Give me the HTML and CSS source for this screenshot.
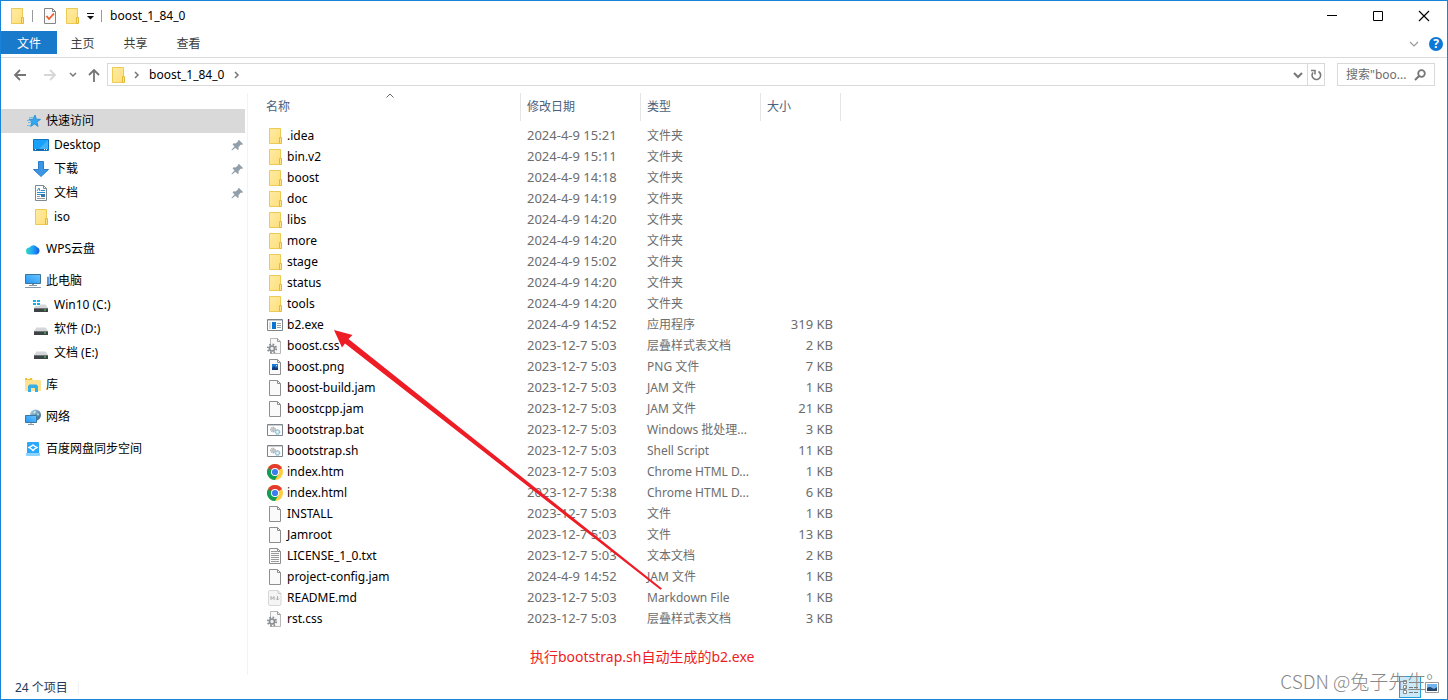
FILE: index.html
```html
<!DOCTYPE html>
<html lang="zh-CN">
<head>
<meta charset="utf-8">
<title>boost_1_84_0</title>
<link rel="stylesheet" href="styles.css">
</head>
<body>
<svg class="sprite" aria-hidden="true">
  <defs>
    <linearGradient id="g-folder" x1="0" y1="0" x2="1" y2="1"><stop offset="0" stop-color="#ffeba3"/><stop offset="1" stop-color="#ffdf7c"/></linearGradient>
    <linearGradient id="g-blue" x1="0" y1="1" x2="1" y2="0"><stop offset="0" stop-color="#2196f3"/><stop offset="1" stop-color="#6cc5ff"/></linearGradient>
    <linearGradient id="g-cloud" x1="0" y1="0" x2="1" y2="0"><stop offset="0" stop-color="#35d6c4"/><stop offset=".5" stop-color="#1ea4f7"/><stop offset="1" stop-color="#1558e0"/></linearGradient>
    <linearGradient id="g-globe" x1="0" y1="0" x2="1" y2="1"><stop offset="0" stop-color="#b9dcec"/><stop offset="1" stop-color="#275a7c"/></linearGradient>
  </defs>
  <symbol id="folder" viewBox="0 0 16 16"><path d="M2.5.5h11v15h-11z" fill="url(#g-folder)" stroke="#eccb55"/><path d="M12.5 9.5h2v6h-2z" fill="#ffe38a" stroke="#e3b93a"/></symbol>
  <symbol id="page" viewBox="0 0 16 16"><path d="M2.5.5h8l3 3v12h-11z" fill="#fafafa" stroke="#8e8e8e"/><path d="M10.5.5v3h3" fill="none" stroke="#8e8e8e"/></symbol>
  <symbol id="text" viewBox="0 0 16 16"><use href="#page"/><path d="M4 3.5h6M4 5.5h8M4 7.5h8M4 9.5h8M4 11.5h8M4 13.5h8" stroke="#9a9a9a"/></symbol>
  <symbol id="picture" viewBox="0 0 16 16"><use href="#page"/><path d="M5 5h6v6H5z" fill="#1f7bd8"/><path d="M5 11V9l2-2 2 2 1-1 1 1v2z" fill="#123c7c"/><path d="M9 6h1v1H9z" fill="#b7e0ff"/></symbol>
  <symbol id="gearpage" viewBox="0 0 16 16"><path d="M3.5.5h7l3 3v12h-10z" fill="#f8f8f8" stroke="#b8b8b8"/><path d="M10.500.5v3h3" fill="none" stroke="#999"/><circle cx="5" cy="10.500" r="4.200" fill="none" stroke="#858b90" stroke-width="1.800" stroke-dasharray="1.650 1.650"/><circle cx="5" cy="10.500" r="2.500" fill="#f0f0f0" stroke="#858b90" stroke-width="1.600"/></symbol>
  <symbol id="app" viewBox="0 0 16 16"><path d="M.5 2.500h15v11H.5z" fill="#fff" stroke="#7d858c"/><path d="M1 3h14v1H1z" fill="#c6cbd0"/><path d="M5 5h4v7H5z" fill="#0874d4"/><path d="M2 5h2v7H2z" fill="#d8dcdf"/><path d="M10 6.500h4M10 8.500h4M10 10.500h4" stroke="#9aa1a7"/></symbol>
  <symbol id="batch" viewBox="0 0 16 16"><path d="M.5 2.500h15v11H.5z" fill="#fff" stroke="#7d858c"/><path d="M1 3.500h14" stroke="#ccd0d4"/><circle cx="6" cy="7.500" r="2.300" fill="#f2f2f2" stroke="#7e888f" stroke-dasharray="1.300 .6"/><circle cx="6" cy="7.500" r="1" fill="none" stroke="#7e888f" stroke-width=".6"/><circle cx="10.500" cy="10" r="2.300" fill="#c4e3f3" stroke="#6f9ab4" stroke-dasharray="1.300 .6"/><circle cx="10.500" cy="10" r=".8" fill="#fff"/></symbol>
  <symbol id="chrome" viewBox="0 0 16 16"><circle cx="8" cy="8" r="8" fill="#ffcd40"/><path d="M8 8 1.070 4A8 8 0 0 1 14.930 4z" fill="#e33b2e"/><path d="M8 4h6.930L8 8z" fill="#e33b2e"/><path d="M1.070 4A8 8 0 0 0 8 16l3.460-6H8L4.540 10z" fill="#109d58"/><path d="M1.070 4 4.540 10 8 8V4z" fill="#109d58"/><path d="M1.070 4 3.500 8 8 4z" fill="#e33b2e"/><path d="M1.070 4 4.540 10 6 7z" fill="#109d58"/><circle cx="8" cy="8" r="4" fill="#fff"/><circle cx="8" cy="8" r="3.100" fill="#3b7ded"/></symbol>
  <symbol id="markdown" viewBox="0 0 16 16"><path d="M1.500 2q0-1.500 1.500-1.500h8l3 3V14q0 1.500-1.500 1.500H3Q1.500 15.500 1.500 14z" fill="#f5f5f5" stroke="#d6d6d6"/><path d="M11 .5v3h3" fill="none" stroke="#ccc"/><path d="M4 10V6.500l1.500 2 1.500-2V10M10.500 6v4M9 8.500l1.500 1.500L12 8.500" fill="none" stroke="#aaa"/></symbol>
  <symbol id="check" viewBox="0 0 16 16"><path d="M2.500.5h8l3 3v12h-11z" fill="#fafafa" stroke="#858585"/><path d="M10.500.5v3h3" fill="none" stroke="#858585"/><path d="m4.500 8 2.500 3 5-5.500" fill="none" stroke="#ee5a24" stroke-width="1.800"/></symbol>
  <symbol id="star" viewBox="0 0 16 16"><path d="m10 2 1.300 4.200 4.200.2-3.600 2.500 1.200 4.500L9.500 11l-4 2.500 1.400-4.300L4 6.300h4z" fill="#35a9ee" stroke="#2186cf" stroke-width=".8"/><path d="M4 4.500h4M2 7.500h3.500M3 9.500h3M2 12.500h4" stroke="#72bce8"/></symbol>
  <symbol id="desktop" viewBox="0 0 16 16"><path d="M.5 2.500h15v11H.5z" fill="#17a1fb" stroke="#1374bd"/><path d="M15 3v9L6 12z" fill="#41b3fb"/><path d="M1 12.500h14" stroke="#1b5d94"/><path d="M2 12.500h1M11 12.500h1M13 12.500h1" stroke="#fff"/></symbol>
  <symbol id="download" viewBox="0 0 16 16"><path d="M5.500.5h5v8h5L8 15.500.5 8.500h5z" fill="#3c96e6" stroke="#2d7dca"/></symbol>
  <symbol id="document" viewBox="0 0 16 16"><path d="M2.500.5h8l3 3v12h-11z" fill="#fff" stroke="#7d8990"/><path d="M10.500.5v3h3" fill="none" stroke="#7d8990"/><path d="m4 6 2-3 1 3M4 7.500h8M4 9.500h4M8 5.500h4" fill="none" stroke="#2d8dc9"/><path d="M8 9h4v3H8z" fill="#3774b0"/><path d="M4 11.500h3M4 13.500h8" stroke="#999"/></symbol>
  <symbol id="cloud" viewBox="0 0 16 16"><path d="M4.500 13.500a3.500 3.500 0 0 1 0-7 4.500 4.500 0 0 1 7.500-.5A4 4 0 0 1 12 13.500z" fill="url(#g-cloud)"/></symbol>
  <symbol id="computer" viewBox="0 0 16 16"><path d="M.5 1.500h15v9H.5z" fill="url(#g-blue)" stroke="#3a739c"/><path d="M7 11h2v1H7z" fill="#809bad"/><path d="M4 12.500h8M0 14.500h16" stroke="#8798a6"/></symbol>
  <symbol id="disk" viewBox="0 0 16 16"><path d="M3.500 6.500h9L15 10H1z" fill="#d4d6d9"/><path d="M1 10h14v4H1z" fill="#3e4245"/><path d="M1 10.500h14" stroke="#70757a"/><path d="M11 11.500h2v1h-2z" fill="#38e15c"/></symbol>
  <symbol id="windisk" viewBox="0 0 16 16"><use href="#disk" y="1"/><path d="M0 2h7v7H0z" fill="#fff"/><path d="M0 3h3v2H0zM4 3h3v2H4zM0 6h3v2H0zM4 6h3v2H4z" fill="#12b2ef"/></symbol>
  <symbol id="library" viewBox="0 0 16 16"><path d="M0 1h7l1 2h8v11H0z" fill="#ffe392"/><path d="M0 1h7v2H0z" fill="#f2c132"/><path d="M2 1.500h3" stroke="#fff"/><path d="M3 15V9l1.500-1.500h7L13 9v6h-3v-4H6v4z" fill="#35afe6"/></symbol>
  <symbol id="network" viewBox="0 0 16 16"><circle cx="10.500" cy="6" r="5.500" fill="url(#g-globe)"/><path d="M8 3l3-1-1 3zM12 4l2 1-1 2z" fill="#d9edf4"/><path d="M.5 6.500h11v7H.5z" fill="url(#g-blue)" stroke="#3a77a3"/><path d="M6 14v1M3 15.500h6" stroke="#8798a6"/></symbol>
  <symbol id="baidu" viewBox="0 0 16 16"><path d="M3 1h10q1 0 1 1v12q0 1-1 1H3q-1 0-1-1V2q0-1 1-1z" fill="#2ca8fa"/><path d="M1 12h14v2q0 1-1 1H2q-1 0-1-1z" fill="#8bd3ff"/><path d="m8 4 1.500 1.200L12 6.500 9.500 8 8 9.500 6.500 8 4 6.500l2.500-1.300z" fill="none" stroke="#fff" stroke-width="1.400"/></symbol>
  <symbol id="pin" viewBox="0 0 16 16"><path d="m10 3 4 4-1 1-1-.4-2.500 2.500.2 2.100-1 .8-2.200-2.300L3 13.500l-.6-.6L5.500 9.500 3.500 7.200l1-1 2 .3L9 4.500 8.900 3.600z" fill="#929fa9"/></symbol>
</svg>

<div class="window">
  <header class="titlebar">
    <svg class="icon"><use href="#folder"/></svg>
    <span class="divider"></span>
    <button class="plain" aria-label="属性"><svg class="icon"><use href="#check"/></svg></button>
    <button class="plain" aria-label="新建文件夹"><svg class="icon"><use href="#folder"/></svg></button>
    <button class="plain quick" aria-label="自定义快速访问工具栏"><svg width="8" height="8" viewBox="0 0 8 8"><path d="M1 1.500h7" stroke="#111"/><path d="M1 4h7L4.500 7.500z" fill="#111"/></svg></button>
    <span class="divider"></span>
    <h1 class="title">boost_1_84_0</h1>
    <div class="controls">
      <button class="plain control" aria-label="最小化"><svg width="12" height="12"><path d="M1 5.500h10" stroke="#000"/></svg></button>
      <button class="plain control" aria-label="最大化"><svg width="12" height="12"><path d="M1.500 1.500h9v9h-9z" fill="none" stroke="#000"/></svg></button>
      <button class="plain control" aria-label="关闭"><svg width="12" height="12"><path d="m1 1 10 10M11 1 1 11" stroke="#000" stroke-width="1.200"/></svg></button>
    </div>
  </header>

  <nav class="ribbon">
    <button class="tab tab-file">文件</button>
    <button class="tab">主页</button>
    <button class="tab">共享</button>
    <button class="tab">查看</button>
    <div class="ribbon-end">
      <button class="plain" aria-label="展开功能区"><svg width="10" height="14"><path d="m1 5 4 4 4-4" fill="none" stroke="#999" stroke-width="1.200"/></svg></button>
      <button class="plain help" aria-label="帮助">?</button>
    </div>
  </nav>

  <div class="navbar">
    <button class="plain" aria-label="后退"><svg width="14" height="14"><path d="M13 7H2M7 2 2 7l5 5" fill="none" stroke="#757575" stroke-width="1.800"/></svg></button>
    <button class="plain forward" aria-label="前进"><svg width="14" height="14"><path d="M1 7h11M7 2l5 5-5 5" fill="none" stroke="#d6d6d6" stroke-width="1.800"/></svg></button>
    <button class="plain recent" aria-label="最近浏览的位置"><svg width="8" height="14"><path d="m1 5 3 3 3-3" fill="none" stroke="#777" stroke-width="1.500"/></svg></button>
    <button class="plain up" aria-label="上移"><svg width="14" height="14"><path d="M7 14V2M2 7l5-5 5 5" fill="none" stroke="#757575" stroke-width="1.800"/></svg></button>
    <div class="address">
      <svg class="icon"><use href="#folder"/></svg>
      <svg class="crumb" width="6" height="8"><path d="m1 1 3 3-3 3" fill="none" stroke="#777" stroke-width="1.500"/></svg>
      <a class="path" href="#">boost_1_84_0</a>
      <svg class="crumb" width="6" height="8"><path d="m1 1 3 3-3 3" fill="none" stroke="#777" stroke-width="1.500"/></svg>
      <button class="plain history" aria-label="历史记录"><svg width="10" height="8"><path d="m1 2 4 4 4-4" fill="none" stroke="#777" stroke-width="2"/></svg></button>
      <button class="plain refresh" aria-label="刷新"><svg width="12" height="12"><path d="M8.500 2.500A4.300 4.300 0 1 1 3 3.500" fill="none" stroke="#777" stroke-width="1.600"/><path d="M1 1.500h4v4" fill="none" stroke="#777" stroke-width="1.500"/></svg></button>
    </div>
    <div class="search">
      <input class="search-input" type="text" aria-label="搜索" placeholder="搜索&quot;boo...">
      <svg width="12" height="12"><circle cx="7.500" cy="4.500" r="3.300" fill="none" stroke="#757575" stroke-width="1.800"/><path d="M5 7 1 11" stroke="#757575" stroke-width="2"/></svg>
    </div>
  </div>

  <div class="content">
    <aside class="sidebar">
      <div class="group">
        <a class="item selected" href="#"><svg class="icon"><use href="#star"/></svg>快速访问</a>
        <a class="item child" href="#"><svg class="icon"><use href="#desktop"/></svg>Desktop<svg class="icon pin"><use href="#pin"/></svg></a>
        <a class="item child" href="#"><svg class="icon"><use href="#download"/></svg>下载<svg class="icon pin"><use href="#pin"/></svg></a>
        <a class="item child" href="#"><svg class="icon"><use href="#document"/></svg>文档<svg class="icon pin"><use href="#pin"/></svg></a>
        <a class="item child" href="#"><svg class="icon"><use href="#folder"/></svg>iso</a>
      </div>
      <div class="group">
        <a class="item" href="#"><svg class="icon"><use href="#cloud"/></svg>WPS云盘</a>
      </div>
      <div class="group">
        <a class="item" href="#"><svg class="icon"><use href="#computer"/></svg>此电脑</a>
        <a class="item child" href="#"><svg class="icon"><use href="#windisk"/></svg>Win10 (C:)</a>
        <a class="item child" href="#"><svg class="icon"><use href="#disk"/></svg>软件 (D:)</a>
        <a class="item child" href="#"><svg class="icon"><use href="#disk"/></svg>文档 (E:)</a>
      </div>
      <div class="group">
        <a class="item" href="#"><svg class="icon"><use href="#library"/></svg>库</a>
      </div>
      <div class="group">
        <a class="item" href="#"><svg class="icon"><use href="#network"/></svg>网络</a>
      </div>
      <div class="group">
        <a class="item" href="#"><svg class="icon"><use href="#baidu"/></svg>百度网盘同步空间</a>
      </div>
    </aside>

    <main class="pane">
      <table class="files">
        <colgroup><col class="col-name"><col class="col-date"><col class="col-type"><col class="col-size"></colgroup>
        <thead>
          <tr>
            <th><button class="head">名称<svg class="sort" width="8" height="5"><path d="m.5 4.500 3.500-3.500 3.500 3.500" fill="none" stroke="#666"/></svg></button></th>
            <th><button class="head">修改日期</button></th>
            <th><button class="head">类型</button></th>
            <th><button class="head">大小</button></th>
          </tr>
        </thead>
        <tbody>
          <tr><td><span class="name"><svg class="icon"><use href="#folder"/></svg>.idea</span></td><td class="num">2024-4-9 15:21</td><td>文件夹</td><td class="size"></td></tr>
          <tr><td><span class="name"><svg class="icon"><use href="#folder"/></svg>bin.v2</span></td><td class="num">2024-4-9 15:11</td><td>文件夹</td><td class="size"></td></tr>
          <tr><td><span class="name"><svg class="icon"><use href="#folder"/></svg>boost</span></td><td class="num">2024-4-9 14:18</td><td>文件夹</td><td class="size"></td></tr>
          <tr><td><span class="name"><svg class="icon"><use href="#folder"/></svg>doc</span></td><td class="num">2024-4-9 14:19</td><td>文件夹</td><td class="size"></td></tr>
          <tr><td><span class="name"><svg class="icon"><use href="#folder"/></svg>libs</span></td><td class="num">2024-4-9 14:20</td><td>文件夹</td><td class="size"></td></tr>
          <tr><td><span class="name"><svg class="icon"><use href="#folder"/></svg>more</span></td><td class="num">2024-4-9 14:20</td><td>文件夹</td><td class="size"></td></tr>
          <tr><td><span class="name"><svg class="icon"><use href="#folder"/></svg>stage</span></td><td class="num">2024-4-9 15:02</td><td>文件夹</td><td class="size"></td></tr>
          <tr><td><span class="name"><svg class="icon"><use href="#folder"/></svg>status</span></td><td class="num">2024-4-9 14:20</td><td>文件夹</td><td class="size"></td></tr>
          <tr><td><span class="name"><svg class="icon"><use href="#folder"/></svg>tools</span></td><td class="num">2024-4-9 14:20</td><td>文件夹</td><td class="size"></td></tr>
          <tr><td><span class="name"><svg class="icon"><use href="#app"/></svg>b2.exe</span></td><td class="num">2024-4-9 14:52</td><td>应用程序</td><td class="size">319 KB</td></tr>
          <tr><td><span class="name"><svg class="icon"><use href="#gearpage"/></svg>boost.css</span></td><td class="num">2023-12-7 5:03</td><td>层叠样式表文档</td><td class="size">2 KB</td></tr>
          <tr><td><span class="name"><svg class="icon"><use href="#picture"/></svg>boost.png</span></td><td class="num">2023-12-7 5:03</td><td>PNG 文件</td><td class="size">7 KB</td></tr>
          <tr><td><span class="name"><svg class="icon"><use href="#page"/></svg>boost-build.jam</span></td><td class="num">2023-12-7 5:03</td><td>JAM 文件</td><td class="size">1 KB</td></tr>
          <tr><td><span class="name"><svg class="icon"><use href="#page"/></svg>boostcpp.jam</span></td><td class="num">2023-12-7 5:03</td><td>JAM 文件</td><td class="size">21 KB</td></tr>
          <tr><td><span class="name"><svg class="icon"><use href="#batch"/></svg>bootstrap.bat</span></td><td class="num">2023-12-7 5:03</td><td>Windows 批处理...</td><td class="size">3 KB</td></tr>
          <tr><td><span class="name"><svg class="icon"><use href="#batch"/></svg>bootstrap.sh</span></td><td class="num">2023-12-7 5:03</td><td>Shell Script</td><td class="size">11 KB</td></tr>
          <tr><td><span class="name"><svg class="icon"><use href="#chrome"/></svg>index.htm</span></td><td class="num">2023-12-7 5:03</td><td>Chrome HTML D...</td><td class="size">1 KB</td></tr>
          <tr><td><span class="name"><svg class="icon"><use href="#chrome"/></svg>index.html</span></td><td class="num">2023-12-7 5:38</td><td>Chrome HTML D...</td><td class="size">6 KB</td></tr>
          <tr><td><span class="name"><svg class="icon"><use href="#page"/></svg>INSTALL</span></td><td class="num">2023-12-7 5:03</td><td>文件</td><td class="size">1 KB</td></tr>
          <tr><td><span class="name"><svg class="icon"><use href="#page"/></svg>Jamroot</span></td><td class="num">2023-12-7 5:03</td><td>文件</td><td class="size">13 KB</td></tr>
          <tr><td><span class="name"><svg class="icon"><use href="#text"/></svg>LICENSE_1_0.txt</span></td><td class="num">2023-12-7 5:03</td><td>文本文档</td><td class="size">2 KB</td></tr>
          <tr><td><span class="name"><svg class="icon"><use href="#page"/></svg>project-config.jam</span></td><td class="num">2024-4-9 14:52</td><td>JAM 文件</td><td class="size">1 KB</td></tr>
          <tr><td><span class="name"><svg class="icon"><use href="#markdown"/></svg>README.md</span></td><td class="num">2023-12-7 5:03</td><td>Markdown File</td><td class="size">1 KB</td></tr>
          <tr><td><span class="name"><svg class="icon"><use href="#gearpage"/></svg>rst.css</span></td><td class="num">2023-12-7 5:03</td><td>层叠样式表文档</td><td class="size">3 KB</td></tr>
        </tbody>
      </table>
      <svg class="arrow" width="330" height="262" viewBox="333 329 330 262" aria-hidden="true"><path d="M334 330 352.500 335 348.500 339 662 588.500 660.500 589.700 345 343.500 342 347.500z" fill="#ee1c25"/></svg>
      <p class="note">执行bootstrap.sh自动生成的b2.exe</p>
    </main>
  </div>

  <footer class="status">
    <span class="count">24 个项目</span>
    <div class="views">
      <button class="plain view active" aria-label="详细信息"><svg width="20" height="16"><path d="M3.500 1.500h3v3h-3zM3.500 6.500h3v3h-3zM3.500 11.500h3v3h-3z" fill="#fff" stroke="#888"/><path d="M9 3.500h4m1 0h4M9 8.500h4m1 0h4M9 13.500h4m1 0h4" stroke="#777"/></svg></button>
      <button class="plain view" aria-label="大图标"><svg width="14" height="12"><path d="M.5 1.500h13v10H.5z" fill="#fff" stroke="#999"/><path d="M2 3h10v7H2z" fill="#72b5ee"/><path d="M2 7q3-2 5 0t5-1v4H2z" fill="#26466b"/></svg></button>
    </div>
    <span class="watermark">CSDN @兔子先生°</span>
  </footer>
</div>
</body>
</html>
```
FILE: styles.css
```css
* { box-sizing: border-box; }

body {
  margin: 0;
  font: 12px/20px "Noto Sans", "Noto Sans CJK SC", sans-serif;
  color: #000;
  background: #fff;
}

a { color: inherit; text-decoration: none; }
svg { display: block; flex: none; }

.sprite { position: absolute; width: 0; height: 0; }
.icon { width: 16px; height: 16px; }

.plain {
  display: flex;
  align-items: center;
  justify-content: center;
  padding: 0;
  border: 0;
  background: none;
  font: inherit;
}

.window {
  display: flex;
  flex-direction: column;
  min-height: 100vh;
  border: 1px solid #1883d7;
}

/* Title bar */
.titlebar {
  display: flex;
  align-items: center;
  gap: 6px;
  height: 30px;
  padding-left: 8px;
}
.divider { width: 1px; height: 12px; margin: 0 2px 0 1px; background: #999; }
.titlebar .divider + .plain { margin-left: 1px; }
.title { margin: 0; font-size: 12px; font-weight: 400; }
.controls { display: flex; margin-left: auto; }
.control { width: 46px; height: 28px; }

/* Ribbon tabs */
.ribbon {
  display: flex;
  align-items: flex-start;
  height: 27px;
  border-bottom: 1px solid #dadbdc;
}
.tab {
  width: 53px;
  height: 23px;
  padding: 2px 2px 0 0;
  border: 0;
  background: none;
  font: inherit;
  color: #3c3c3c;
}
.tab-file { width: 56px; padding-right: 0; background: #1979ca; color: #fff; }
.ribbon-end { display: flex; align-items: center; gap: 10px; height: 25px; margin-left: auto; padding-right: 4px; }
.help {
  width: 14px;
  height: 14px;
  border-radius: 50%;
  background: #0b78d8;
  color: #fff;
  font-weight: 700;
}

/* Navigation row */
.navbar {
  display: flex;
  align-items: center;
  height: 33px;
  padding: 0 12px;
}
.forward { margin-left: 16px; }
.recent { margin-left: 12px; }
.up { margin: 0 6px 0 10px; }
.address {
  display: flex;
  flex: 1;
  align-items: center;
  height: 23px;
  padding-left: 2px;
  border: 1px solid #d9d9d9;
}
.crumb { margin: 0 9px 0 8px; }
.path { padding-right: 2px; }
.history { width: 18px; margin-left: auto; }
.refresh { width: 17px; height: 21px; border-left: 1px solid #d9d9d9; }
.search {
  display: flex;
  align-items: center;
  width: 98px;
  height: 23px;
  margin-left: 12px;
  padding: 0 8px;
  border: 1px solid #d9d9d9;
}
.search-input {
  flex: 1;
  min-width: 0;
  padding: 0;
  border: 0;
  outline: 0;
  background: none;
  font: inherit;
}
.search-input::placeholder { color: #6d6d6d; opacity: 1; }

/* Main area */
.content { display: flex; flex: 1; }
.sidebar {
  width: 247px;
  margin-top: 2px;
  padding: 16px 2px 0 0;
  border-right: 1px solid #f3f3f3;
}
.group + .group { margin-top: 8px; }
.item {
  display: flex;
  align-items: center;
  gap: 5px;
  height: 24px;
  padding-left: 24px;
}
.child { padding-left: 32px; }
.selected { background: #d9d9d9; }
.pin { margin-left: auto; }

.pane { flex: 1; padding: 2px 0 0 12px; }
.files {
  width: 581px;
  table-layout: fixed;
  border-collapse: collapse;
  color: #6d6d6d;
}
.col-name { width: 261px; }
.col-date, .col-type { width: 120px; }
.col-size { width: 80px; }
.files th { height: 33px; padding: 0; vertical-align: top; font-weight: 400; }
.head {
  position: relative;
  display: block;
  width: 100%;
  height: 28px;
  padding: 0 6px;
  border: 0;
  border-right: 1px solid #e5e5e5;
  background: none;
  font: inherit;
  text-align: left;
  color: #4c607a;
}
.sort { position: absolute; top: 0; left: calc(50% - 4px); }
.files td { height: 21px; padding: 0 6px; vertical-align: top; white-space: nowrap; }
.name { display: flex; align-items: center; gap: 4px; padding-left: 1px; color: #000; }
.files .num { font-size: 13px; line-height: 18px; }
.files .size { padding-right: 8px; font-size: 13px; line-height: 18px; text-align: right; }

/* Annotation over the list */
.arrow { position: absolute; top: 329px; left: 333px; }
.note { margin: 17px 0 0 270px; font-size: 14px; color: #ee1c25; }

/* Status bar */
.status {
  display: flex;
  align-items: center;
  position: relative;
  height: 24px;
  padding-left: 14px;
}
.count { margin-top: 2px; padding-right: 10px; border-right: 1px solid #f0f0f0; line-height: 12px; color: #1e395b; }
.views { display: flex; margin-left: auto; padding-right: 4px; }
.view { width: 22px; height: 22px; }
.active { border: 1px solid #26a0da; background: #cbe8f6; }
.watermark {
  position: absolute;
  right: 14px;
  bottom: 4px;
  font: 300 19px/28px "Noto Sans CJK SC", sans-serif;
  color: #888;
}
```
